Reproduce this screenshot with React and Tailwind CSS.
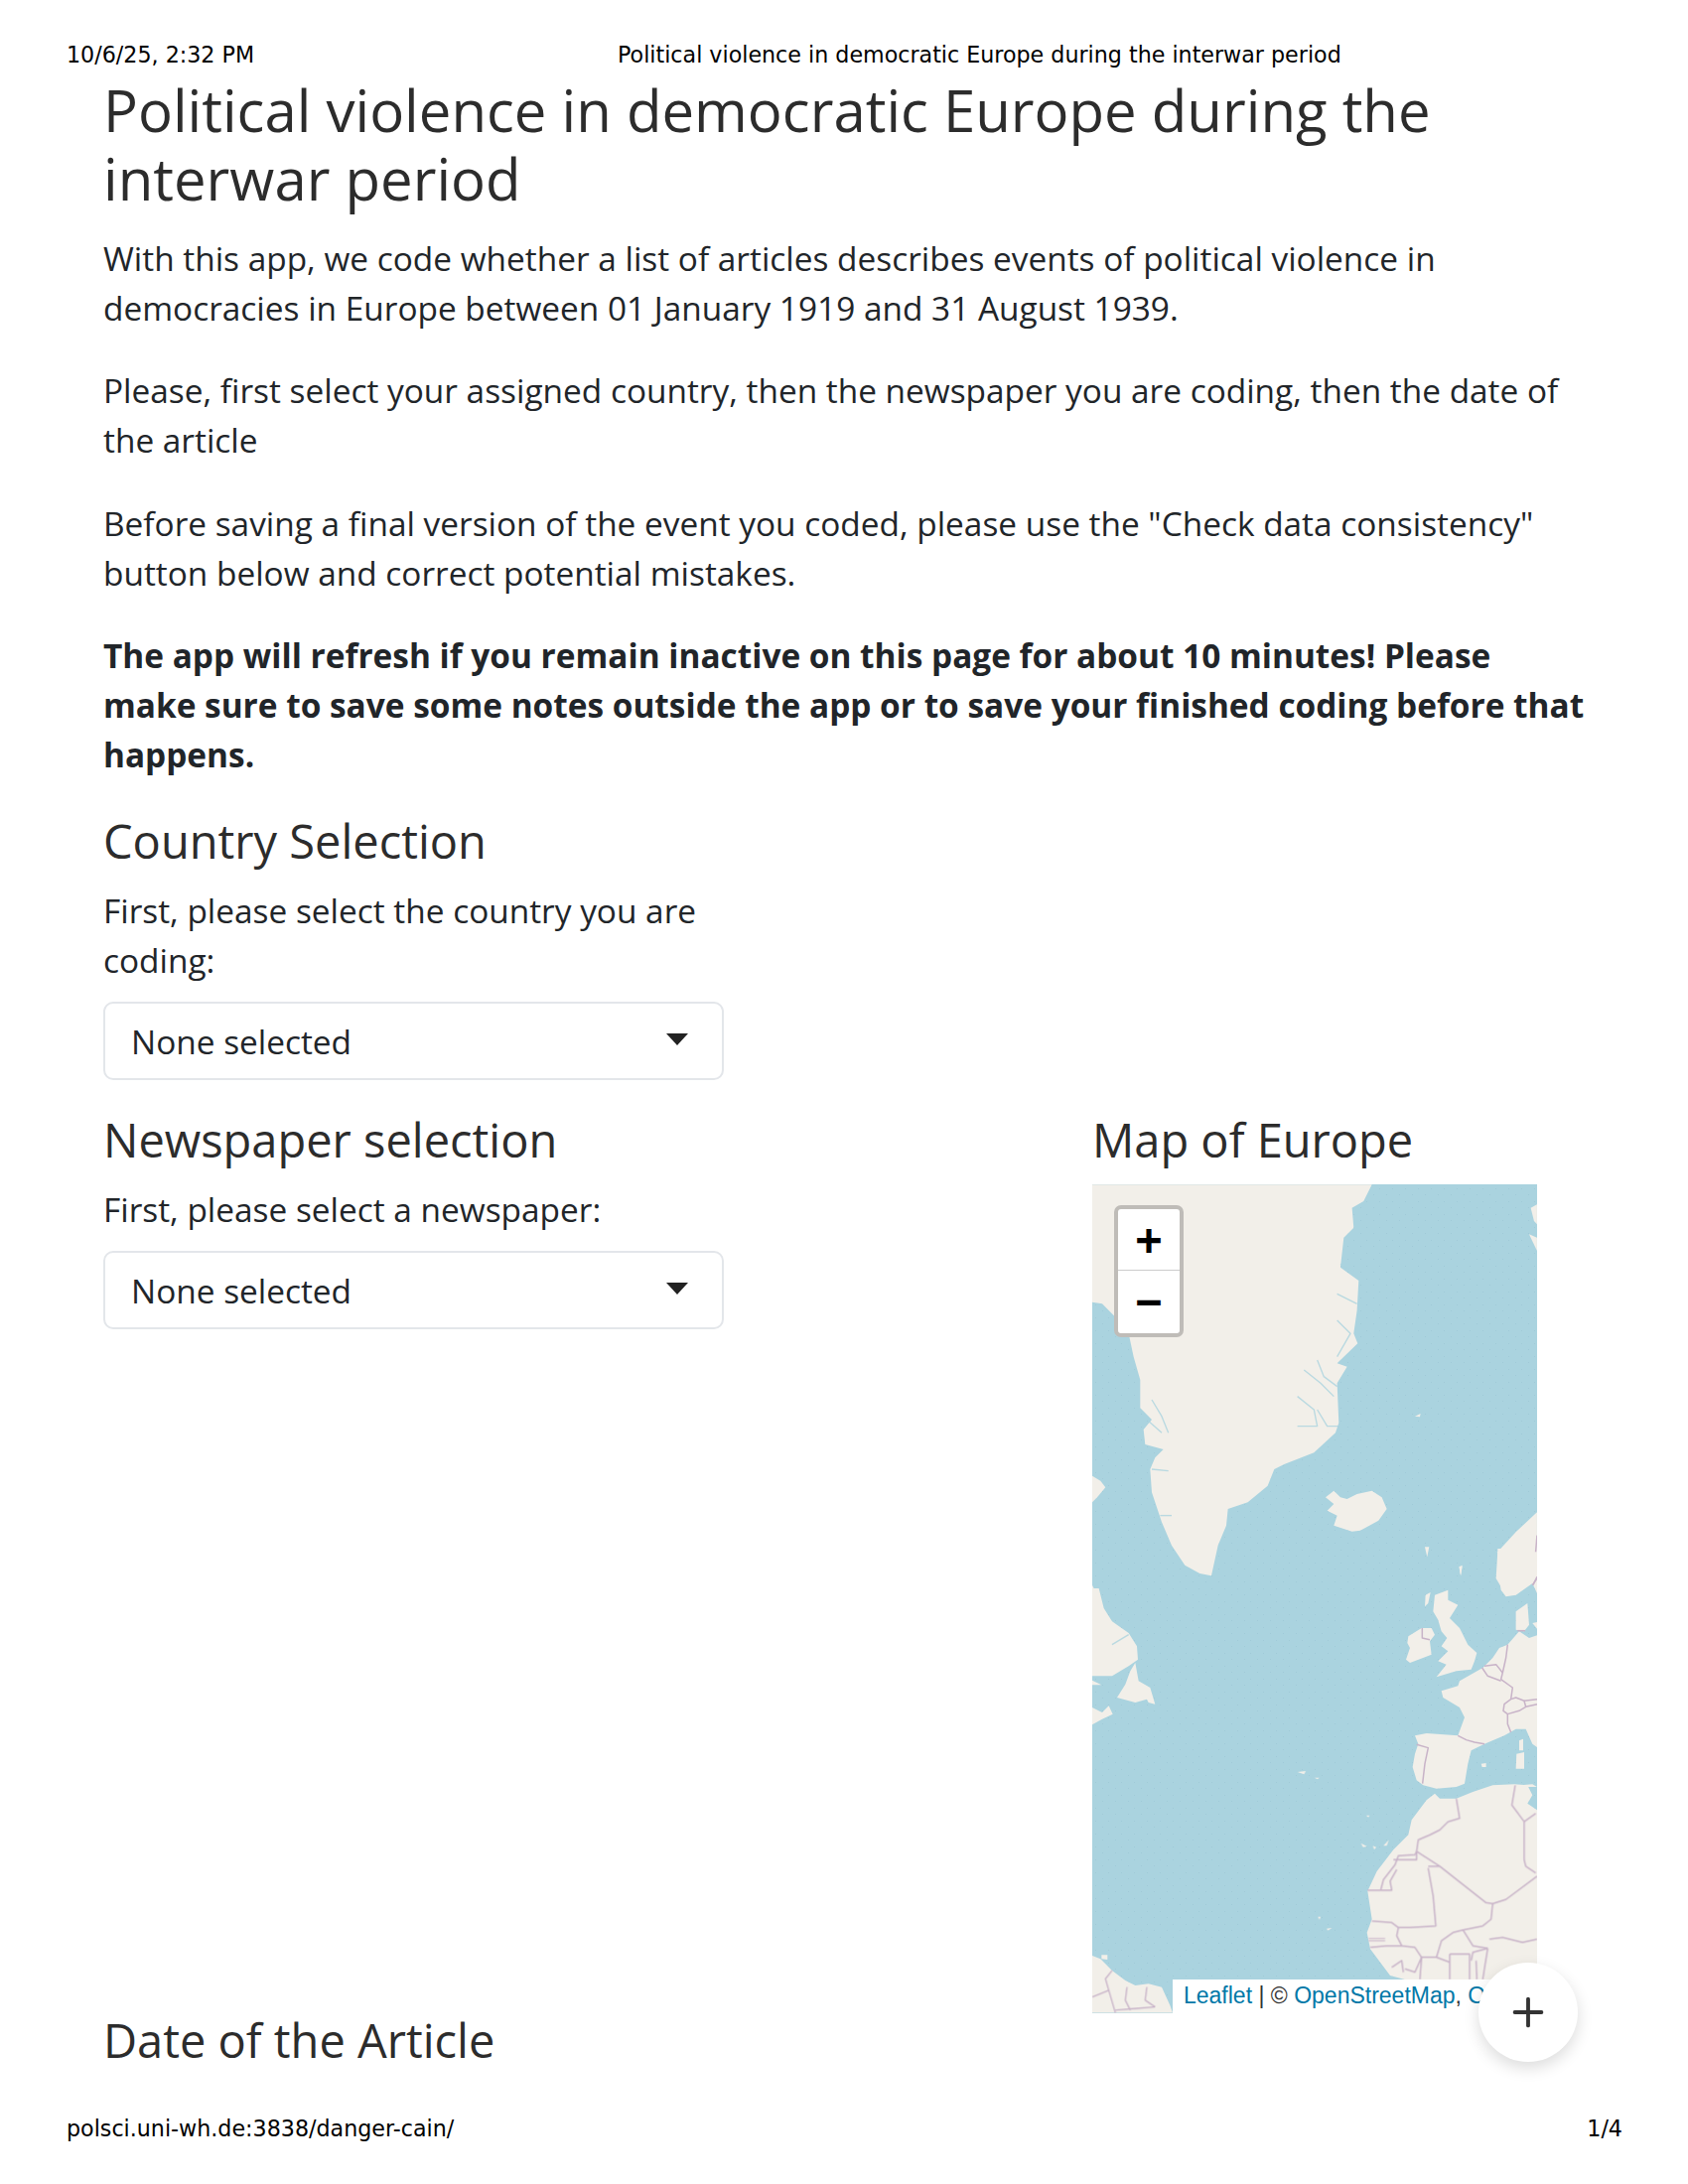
import React from 'react';
import { Plus } from 'lucide-react';

const LAND = '#f2efe9';
const WATER = '#aad3df';
const BORDER = '#c8b3c8';

// land outlines, each group is in the coordinates of a 3x crop of the map
const Land = ({ points }) => <polygon points={points} fill={LAND} />;
const Line = ({ points, width = 4.5 }) => (
  <polyline points={points} fill="none" stroke={BORDER} strokeWidth={width} strokeLinejoin="round" />
);
const Fjord = ({ points }) => (
  <polyline points={points} fill="none" stroke={WATER} strokeWidth="4" strokeLinejoin="round" opacity="0.8" />
);

const MapDrawing = () => (
  <svg viewBox="0 0 448 835" className="block w-full h-full">
    <defs>
      <filter id="soft"><feGaussianBlur stdDeviation="0.5" /></filter>
      <pattern id="seaDots" width="13" height="13" patternUnits="userSpaceOnUse">
        <rect x="3" y="4" width="1" height="1" fill="#a0cad8" />
        <rect x="10" y="10" width="1" height="1" fill="#a0cad8" />
      </pattern>
    </defs>
    <rect width="448" height="835" fill={WATER} />
    <rect width="448" height="835" fill="url(#seaDots)" />

    <g filter="url(#soft)">
      {/* north: greenland, iceland, norway */}
      <g transform="translate(-20,-13) scale(0.3333)">
        <Land points="60,40 905,40 880,90 845,110 850,170 820,200 810,290 865,330 860,420 850,490 862,520 800,580 830,590 800,640 805,760 795,790 730,850 640,885 610,900 590,950 530,1000 470,1020 465,1070 440,1130 420,1222 385,1215 340,1190 300,1130 270,1060 240,970 235,900 250,865 275,840 220,825 215,780 240,750 205,715 205,630 185,560 170,490 130,440 90,400 60,395" />
        <Land points="765,985 790,965 810,985 830,990 860,975 905,965 935,985 950,1020 925,1055 870,1085 845,1088 790,1070 800,1040 770,1025 790,1005" />
        <Land points="1404,1030 1340,1090 1285,1150 1280,1230 1310,1280 1340,1280 1404,1230" />
        <Land points="1404,100 1385,110 1395,150 1404,160" />
        <Land points="1380,190 1404,240 1404,200" />
        <Land points="60,920 85,935 100,955 75,985 60,1000" />
        <Land points="60,1250 80,1290 100,1350 60,1350" />
        <Land points="1065,1135 1078,1135 1072,1165" />
        <Land points="1170,1195 1178,1195 1172,1220" />
        <Land points="1035,740 1052,732 1050,742" />
        <Fjord points="700,600 750,640 790,680" />
        <Fjord points="740,570 760,620 800,650" />
        <Fjord points="680,680 730,720 740,770 680,770" />
        <Fjord points="740,720 770,770 805,770" />
        <Fjord points="800,450 840,490 800,560" />
        <Fjord points="800,370 860,400" />
        <Fjord points="810,280 850,300" />
        <Fjord points="240,690 270,740 290,790" />
        <Fjord points="225,750 270,790" />
        <Fjord points="240,900 290,905" />
        <Fjord points="265,1040 300,1040" />
      </g>

      {/* atlantic side: canada, south america, islands */}
      <g transform="translate(0,407) scale(0.3333)">
        <Land points="0,0 20,0 35,60 60,100 110,135 135,175 138,215 110,235 60,265 0,265" />
        <Land points="130,225 140,280 175,300 190,350 170,345 165,335 130,345 75,330 100,290 115,250" />
        <Land points="0,360 30,375 50,355 62,380 30,395 0,412" />
        <Land points="0,278 28,292 0,292" />
        <Land points="0,1110 25,1120 60,1155 100,1185 130,1200 170,1195 210,1205 235,1260 243,1283 0,1283" />
        <Land points="28,1108 46,1108 46,1122 28,1120" />
        <Fjord points="60,170 110,140" />
        <Land points="620,555 645,552 640,562" />
        <Land points="672,572 686,572 680,577" />
        <Land points="828,686 838,686 834,692" />
        <Land points="812,770 830,780 818,782" />
        <Land points="848,778 858,782 852,790" />
        <Land points="880,778 896,760 890,778" />
        <Land points="682,992 690,992 686,1002" />
        <Land points="708,1028 724,1026 712,1034" />
      </g>

      {/* western europe */}
      <g transform="translate(270,367) scale(0.3333)">
        <Land points="145,265 185,240 215,240 225,260 210,280 215,320 150,345 138,335 150,300 142,285" />
        <Land points="225,140 265,125 265,155 295,170 270,210 300,240 325,290 352,315 345,340 335,365 290,370 230,388 260,350 235,340 265,310 245,295 262,270 245,250 235,215 220,190" />
        <Land points="197,140 212,132 205,165 195,175" />
        <Land points="298,55 308,50 304,82" />
        <Land points="415,0 534,0 534,135 520,105 470,140 440,145 425,125 415,60" />
        <Land points="470,190 505,165 510,230 495,250 470,245" />
        <Land points="520,225 534,222 534,242" />
        <Land points="480,250 510,270 534,262 534,600 520,590 500,545 470,545 435,565 375,590 335,610 325,650 315,710 290,720 230,725 190,715 170,700 158,660 165,620 175,590 165,565 200,558 295,565 315,510 300,480 250,450 245,430 295,415 300,400 370,360 400,330 420,300 445,290" />
        <Land points="480,580 492,575 492,610 480,610" />
        <Land points="472,620 495,615 495,665 470,665" />
        <Land points="365,650 380,648 380,660 368,660" />
        <Land points="420,720 520,712 534,720" />
      </g>

      {/* north and west africa */}
      <g transform="translate(270,597) scale(0.3333)">
        <Land points="225,50 240,65 290,65 340,45 400,25 465,22 505,25 520,55 505,80 534,100 534,720 90,600 30,520 20,470 35,430 22,345 50,285 100,220 145,175 155,130 200,70" />
        <Land points="170,0 280,0 225,30 190,15" />
      </g>
    </g>

    {/* borders */}
    <g transform="translate(-20,-13) scale(0.3333)">
      <Line points="1404,1100 1400,1150" />
      <Line points="1404,1225 1392,1250" />
    </g>
    <g transform="translate(0,407) scale(0.3333)">
      <Line points="60,1155 40,1180 50,1215 0,1235" width="4" />
      <Line points="50,1215 70,1283" width="4" />
      <Line points="105,1205 100,1245 115,1275" width="4" />
      <Line points="70,1275 130,1270 190,1265" width="4" />
      <Line points="165,1205 160,1245 190,1265" width="4" />
    </g>
    <g transform="translate(270,367) scale(0.3333)">
      <Line points="187,240 187,270 210,275" />
      <Line points="445,290 440,330 430,375 425,395 460,420 455,455" />
      <Line points="375,355 410,350 430,375" />
      <Line points="368,360 385,385 425,400" />
      <Line points="455,455 435,470 432,490 445,500 480,490 500,478 495,460 470,450 455,455" />
      <Line points="495,460 534,455" />
      <Line points="500,478 534,470" />
      <Line points="445,500 445,530 455,555" />
      <Line points="295,565 320,578 345,585 375,590" />
      <Line points="170,592 205,602 195,650 188,710" />
      <Line points="475,248 498,248" />
      <Line points="520,110 534,90" />
    </g>
    <g transform="translate(270,597) scale(0.3333)">
      <Line points="290,65 300,125 265,135 240,160 210,175 175,190 170,225" />
      <Line points="170,225 240,270 380,380 400,383 440,370 534,300" />
      <Line points="170,225 165,235 115,238 105,265 70,310 62,340" />
      <Line points="100,250 170,250 170,225" />
      <Line points="110,280 90,315 95,342 22,342" />
      <Line points="205,270 240,270" />
      <Line points="205,275 220,360 228,450 150,455 115,455 95,440 35,435" />
      <Line points="400,383 395,430 370,450 310,462 280,470 245,495 230,545" />
      <Line points="310,462 340,510 385,518" />
      <Line points="115,455 110,480 125,510 165,515 185,545 230,545 270,560" />
      <Line points="25,488 75,488" width="3" />
      <Line points="25,495 75,495" width="3" />
      <Line points="30,515 80,510 125,510" />
      <Line points="95,575 125,555 130,590" />
      <Line points="135,580 165,590 185,545 180,612" />
      <Line points="385,518 340,530 335,555" />
      <Line points="270,535 270,612" />
      <Line points="270,535 330,535 330,612" />
      <Line points="350,555 352,612" />
      <Line points="385,518 375,580 370,612" />
      <Line points="390,490 430,485 490,500 534,490" />
      <Line points="468,25 458,85 495,135 495,250 500,270 530,290" />
      <Line points="495,135 530,110" />
    </g>
  </svg>
);

const Select = () => (
  <div className="w-[625px] h-[79px] border-2 border-[#e3e6ea] rounded-[10px] bg-white flex items-center justify-between pl-[26px] pr-[34px] text-[33.4px] text-[#212529]">
    <span>None selected</span>
    <span className="w-0 h-0 mb-[4px] border-x-[11px] border-x-transparent border-t-[12px] border-t-[#222]"></span>
  </div>
);

const ZoomButton = ({ label, className = '' }) => (
  <div className={`h-[62px] flex items-center justify-center font-['DejaVu_Sans_Mono',monospace] font-bold text-[44px] leading-none text-black ${className}`}>
    {label}
  </div>
);

export default function App() {
  return (
    <div className="relative w-[1700px] h-[2200px] bg-white flex flex-col font-['Open_Sans',sans-serif] text-[#212529] overflow-hidden">
      {/* print header */}
      <div className="flex pl-[67px] pt-[43px] h-[76px] text-[22.2px] leading-[24px] text-black font-['DejaVu_Sans',sans-serif]">
        <span className="w-[555px]">10/6/25, 2:32 PM</span>
        <span>Political violence in democratic Europe during the interwar period</span>
      </div>

      <main className="flex-1 pl-[104px]">
        <h1 className="w-[1492px] text-[58.1px] leading-[69px] text-[#2c2c2c]">
          Political violence in democratic Europe during the interwar period
        </h1>

        <div className="w-[1492px] mt-[21px] text-[33.4px] leading-[50px]">
          <p>With this app, we code whether a list of articles describes events of political violence in democracies in Europe between 01 January 1919 and 31 August 1939.</p>
          <p className="mt-[33.4px]">Please, first select your assigned country, then the newspaper you are coding, then the date of the article</p>
          <p className="mt-[33.4px]">Before saving a final version of the event you coded, please use the "Check data consistency" button below and correct potential mistakes.</p>
          <p className="mt-[33.4px] font-bold">The app will refresh if you remain inactive on this page for about 10 minutes! Please make sure to save some notes outside the app or to save your finished coding before that happens.</p>
        </div>

        <h3 className="mt-[35px] text-[47px] leading-[55px] text-[#2c2c2c]">Country Selection</h3>
        <p className="mt-[17px] w-[625px] text-[33.4px] leading-[50px]">First, please select the country you are coding:</p>
        <div className="mt-[17px]"><Select /></div>

        <div className="flex mt-[33px]">
          <div className="w-[996px]">
            <h3 className="text-[47px] leading-[55px] text-[#2c2c2c]">Newspaper selection</h3>
            <p className="mt-[17px] text-[33.4px] leading-[50px]">First, please select a newspaper:</p>
            <div className="mt-[17px]"><Select /></div>
            <h3 className="mt-[689px] text-[47px] leading-[55px] text-[#2c2c2c]">Date of the Article</h3>
          </div>
          <div className="w-[448px]">
            <h3 className="text-[47px] leading-[55px] text-[#2c2c2c]">Map of Europe</h3>
            <div className="relative mt-[17px] w-[448px] h-[835px]">
              <MapDrawing />
              <div className="absolute left-[22px] top-[21px] w-[70px] h-[133px] border-[4px] border-[#bfbcb8] rounded-[7px] bg-white flex flex-col">
                <ZoomButton label="+" className="border-b border-[#ccc]" />
                <ZoomButton label="−" />
              </div>
              <div className="absolute left-[81px] right-0 bottom-0 h-[34px] bg-white overflow-hidden whitespace-nowrap pl-[11px] font-['Liberation_Sans',sans-serif] text-[23px] leading-[33px] text-[#333]">
                <span className="text-[#0078a8]">Leaflet</span> | © <span className="text-[#0078a8]">OpenStreetMap</span>, <span className="text-[#0078a8]">ODbL</span>
              </div>
              <button className="absolute right-[-41px] bottom-[-49px] w-[100px] h-[100px] rounded-full bg-white flex items-center justify-center text-[#333] shadow-[0_6px_16px_rgba(0,0,0,0.14)]">
                <Plus size={46} strokeWidth={2} />
              </button>
            </div>
          </div>
        </div>
      </main>

      {/* print footer */}
      <div className="flex justify-between pl-[67px] pr-[66px] pb-[44px] text-[22.2px] leading-[24px] text-black font-['DejaVu_Sans',sans-serif]">
        <span>polsci.uni-wh.de:3838/danger-cain/</span>
        <span>1/4</span>
      </div>
    </div>
  );
}
